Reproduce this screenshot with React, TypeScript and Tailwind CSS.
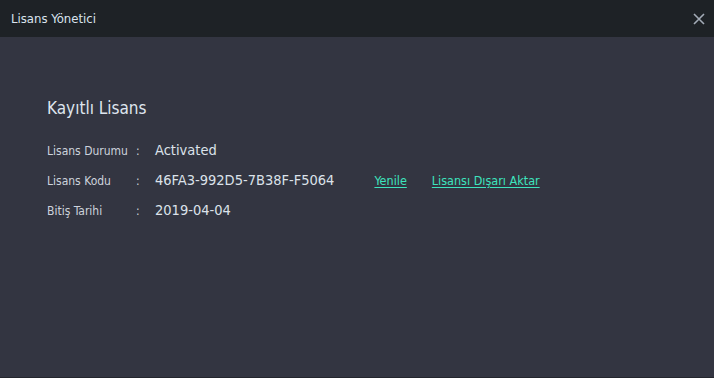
import React from "react";

const rows = [
  { label: "Lisans Durumu", value: "Activated" },
  { label: "Lisans Kodu", value: "46FA3-992D5-7B38F-F5064", links: true },
  { label: "Bitiş Tarihi", value: "2019-04-04" },
];

const App = () => {
  return (
    <div
      className="w-[714px] h-[378px] flex flex-col bg-[#333541] border-b border-[#24262d]"
      style={{ fontFamily: "Tahoma, 'DejaVu Sans Condensed', 'DejaVu Sans', sans-serif" }}
    >
      <div className="h-[37px] shrink-0 bg-[#1e2226] flex items-center justify-between pl-[11px] pr-[8px]">
        <span className="text-[13px] text-[#dbe4ef]">Lisans Yönetici</span>
        <button className="w-[14px] h-[14px] flex items-center justify-center text-[#a3abb6]">
          <svg width="12" height="12" viewBox="0 0 12 12">
            <path d="M1 1 L11 11 M11 1 L1 11" stroke="currentColor" strokeWidth="1.6" />
          </svg>
        </button>
      </div>
      <div className="flex-1 pl-[47px] pt-[61px]">
        <h1 className="text-[17px] leading-[20px] text-[#dfe5ee] mb-[23px]">Kayıtlı Lisans</h1>
        <div className="flex flex-col gap-[10px]">
          {rows.map((r) => (
            <div key={r.label} className="flex items-center h-[20px]">
              <span className="w-[89px] text-[12px] text-[#cdd3dc]">{r.label}</span>
              <span className="w-[19px] text-[12px] text-[#cdd3dc]">:</span>
              <span className="text-[14.5px] text-[#dce2ea]">{r.value}</span>
              {r.links && (
                <div className="flex gap-[25px] ml-[40px] text-[12.5px] text-[#3de3bd]">
                  <a className="underline underline-offset-2 cursor-pointer">Yenile</a>
                  <a className="underline underline-offset-2 cursor-pointer">Lisansı Dışarı Aktar</a>
                </div>
              )}
            </div>
          ))}
        </div>
      </div>
    </div>
  );
};

export default App;
